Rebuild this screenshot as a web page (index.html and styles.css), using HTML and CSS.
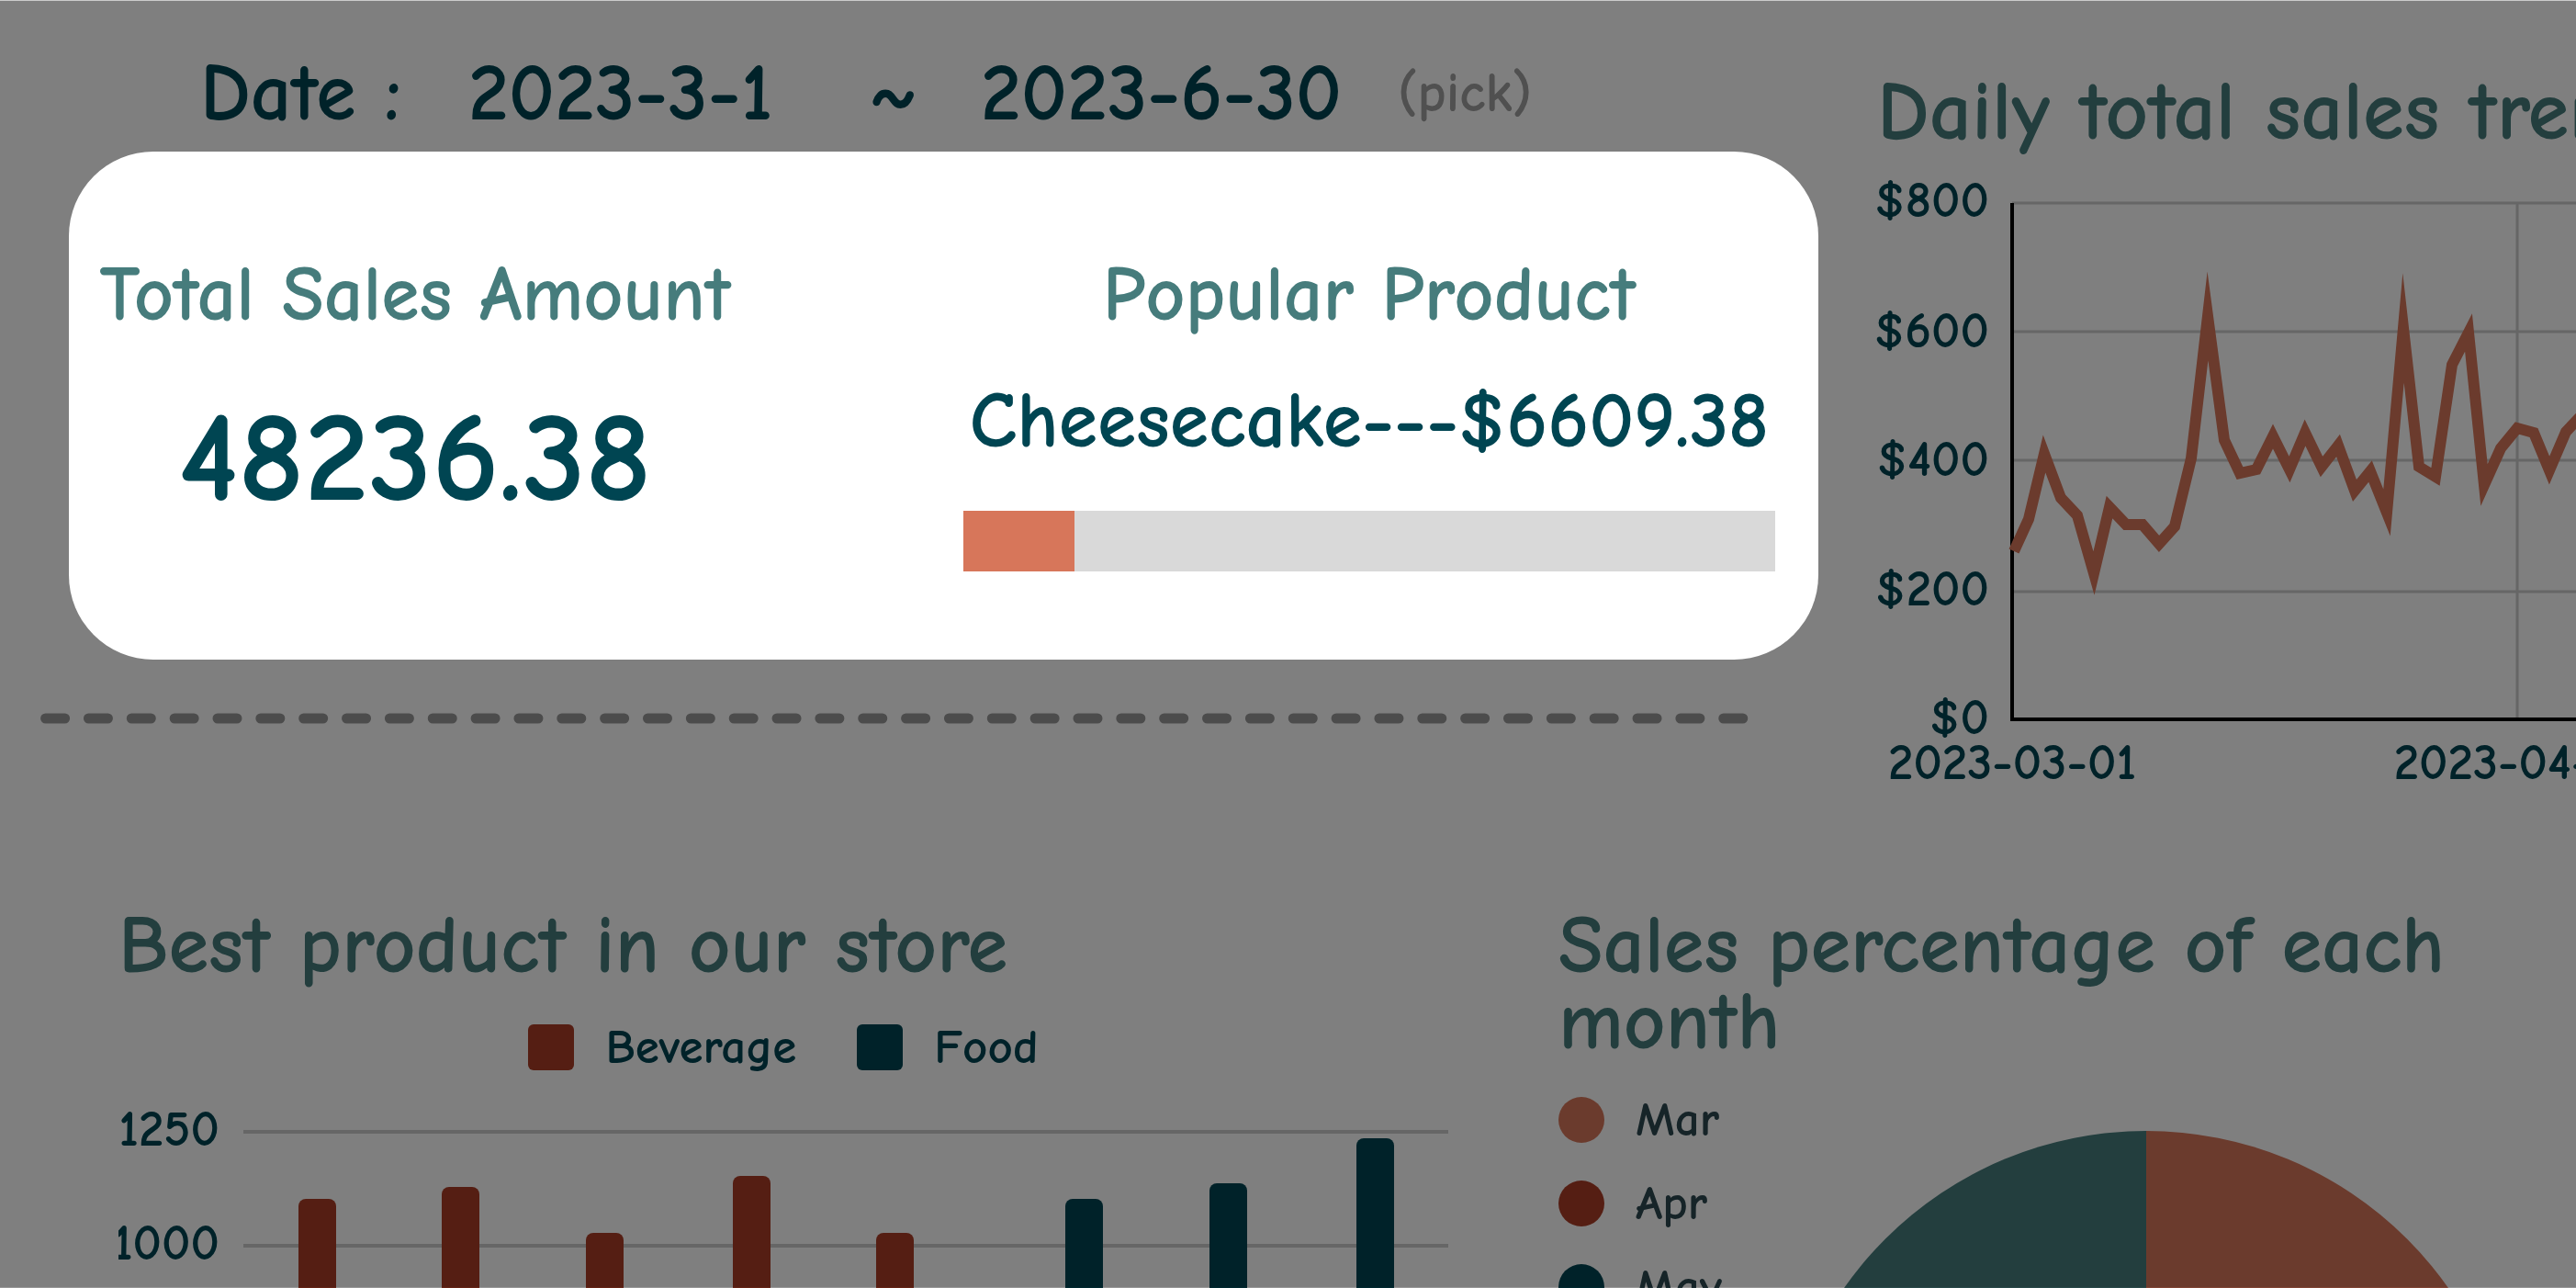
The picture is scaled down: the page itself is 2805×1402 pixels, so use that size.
FILE: index.html
```html
<!DOCTYPE html>
<html lang="en">
<head>
<meta charset="utf-8">
<title>Sales dashboard</title>
<link rel="stylesheet" href="styles.css">
</head>
<body>
<main class="page">
  <section class="summary">
    <div class="overview">
      <div class="dates">
        <span class="dates-label">Date :</span>
        <time class="dates-from">2023-3-1</time>
        <span class="dates-sep">~</span>
        <time class="dates-to">2023-6-30</time>
        <button class="pick" type="button">(pick)</button>
      </div>
      <div class="card">
        <div class="stat">
          <h2 class="card-title">Total Sales Amount</h2>
          <p class="total">48236.38</p>
        </div>
        <div class="stat">
          <h2 class="card-title">Popular Product</h2>
          <p class="product">Cheesecake---$6609.38</p>
          <div class="bar"><div class="bar-fill" style="width:13.7%"></div></div>
        </div>
      </div>
      <svg class="divider" viewBox="0 0 1860 12" aria-hidden="true">
        <line x1="6" y1="6" x2="1856" y2="6" stroke="#999" stroke-width="11" stroke-linecap="round" stroke-dasharray="21 25.85"/>
      </svg>
    </div>
    <div class="trend">
      <h2 class="title title-line">Daily total sales trend</h2>
      <svg class="trend-chart" viewBox="0 0 761 690" role="img" aria-label="Daily total sales trend">
        <g stroke="#ccc" stroke-width="3">
          <path d="M147 41H761M147 181H761M147 321H761M147 464H761M697 41V603"/>
        </g>
        <path d="M147 41V603H761" fill="none" stroke="#000" stroke-width="4"/>
        <polyline fill="none" stroke="#d7765a" stroke-width="12" stroke-miterlimit="30" points="149,420 165,385 182,314 200,362 218,381 236,444 253,372 271,391 289,391 307,412 324,393 342,319 360,164 378,299 395,335 413,331 431,295 449,331 466,291 484,328 502,305 520,354 537,333 555,378 573,177 590,328 608,339 626,217 644,182 661,348 679,308 697,286 715,291 732,332 750,290 768,271"/>
        <g class="tick" text-anchor="end">
          <text x="122" y="56">$800</text>
          <text x="122" y="198">$600</text>
          <text x="122" y="338">$400</text>
          <text x="122" y="479">$200</text>
          <text x="122" y="619">$0</text>
        </g>
        <g class="tick" text-anchor="middle">
          <text x="147" y="668">2023-03-01</text>
          <text x="697" y="668">2023-04-01</text>
        </g>
      </svg>
    </div>
  </section>

  <section class="details">
    <div class="best">
      <h2 class="title">Best product in our store</h2>
      <ul class="legend-row">
        <li class="key"><span class="swatch beverage"></span>Beverage</li>
        <li class="key"><span class="swatch food"></span>Food</li>
      </ul>
      <svg class="best-chart" viewBox="0 0 1448 460" role="img" aria-label="Best products">
        <path d="M136 42H1448M136 166H1448" stroke="#ccc" stroke-width="4"/>
        <g fill="#aa3c26">
          <rect x="196" y="115" width="41" height="400" rx="8"/>
          <rect x="352" y="102" width="41" height="400" rx="8"/>
          <rect x="509" y="152" width="41" height="400" rx="8"/>
          <rect x="669" y="90" width="41" height="400" rx="8"/>
          <rect x="825" y="152" width="41" height="400" rx="8"/>
        </g>
        <g fill="#004552">
          <rect x="1031" y="115" width="41" height="400" rx="8"/>
          <rect x="1188" y="98" width="41" height="400" rx="8"/>
          <rect x="1348" y="49" width="41" height="400" rx="8"/>
        </g>
        <g class="tick" text-anchor="end">
          <text x="110" y="57">1250</text>
          <text x="110" y="181">1000</text>
        </g>
      </svg>
    </div>
    <div class="months">
      <h2 class="title">Sales percentage of each month</h2>
      <div class="months-body">
        <ul class="legend-col">
          <li class="key"><span class="dot mar"></span>Mar</li>
          <li class="key"><span class="dot apr"></span>Apr</li>
          <li class="key"><span class="dot may"></span>May</li>
        </ul>
        <svg class="pie" viewBox="0 0 804 804" role="img" aria-label="Sales by month">
          <path d="M402 402V0A402 402 0 0 1 402 804Z" fill="#d7765a"/>
          <path d="M402 402V0A402 402 0 0 0 402 804Z" fill="#467c7c"/>
        </svg>
      </div>
    </div>
  </section>
</main>
<div class="overlay"></div>
</body>
</html>
```
FILE: styles.css
```css
* { box-sizing: border-box; margin: 0; padding: 0; }

body {
  height: 100vh;
  overflow: hidden;
  background: #fff;
  color: #004552;
  font-family: "Comic Sans MS", "Comic Neue", "Open Sans", sans-serif;
  font-weight: 700;
}

ul { list-style: none; }

.overlay {
  position: fixed;
  inset: 0;
  z-index: 1;
  background: rgba(0, 0, 0, 0.5);
  background-clip: padding-box;
  border-top: 1px solid rgba(0, 0, 0, 0.2);
  border-bottom: 1px solid rgba(0, 0, 0, 0.4);
}

.summary {
  display: grid;
  grid-template-columns: minmax(0, 1980fr) minmax(0, 761fr);
  column-gap: 64px;
}

.dates {
  display: flex;
  align-items: center;
  padding: 52px 0 13px 218px;
  font-size: 88px;
  line-height: 100px;
  white-space: nowrap;
}
.dates-label { width: 292px; }
.dates-from { width: 436px; }
.dates-sep { width: 122px; }
.dates-to { width: 454px; }
.pick {
  border: 0;
  background: none;
  color: #a0a0a0;
  font: inherit;
  font-size: 60px;
}

.card {
  position: relative;
  z-index: 2;
  display: grid;
  grid-template-columns: minmax(0, 694fr) minmax(0, 884fr);
  column-gap: 250px;
  margin-left: 75px;
  padding: 106px 47px 96px 30px;
  border-radius: 92px;
  background: #fff;
  text-align: center;
  white-space: nowrap;
}
.card-title {
  color: #467c7c;
  font-size: 84px;
  font-weight: 700;
  line-height: 100px;
}
.total {
  margin-top: 58px;
  font-size: 140px;
  line-height: 140px;
}
.product {
  margin-top: 38px;
  font-size: 86px;
  line-height: 100px;
}
.bar {
  height: 66px;
  margin-top: 47px;
  background: #d9d9d9;
}
.bar-fill { height: 100%; background: #d7765a; }

.divider {
  display: block;
  width: 94%;
  margin: 58px 0 0 43px;
}

.title {
  color: #467c7c;
  font-size: 89px;
  font-weight: 700;
  line-height: 83px;
}
.title-line {
  overflow: hidden;
  font-size: 91px;
  line-height: 100px;
  white-space: nowrap;
}

.trend { padding-top: 72px; }
.trend-chart {
  display: block;
  width: 100%;
  margin-top: 8px;
  overflow: visible;
}

.tick { fill: #004552; font-size: 55px; }

.details {
  display: grid;
  grid-template-columns: minmax(0, 1448fr) minmax(0, 1108fr);
  column-gap: 120px;
  margin-top: 118px;
  padding-left: 129px;
}

.legend-row {
  display: flex;
  justify-content: center;
  gap: 66px;
  margin-top: 44px;
}
.key {
  display: flex;
  align-items: center;
  gap: 34px;
  font-size: 53px;
  line-height: 50px;
}
.swatch, .dot {
  flex: none;
  width: 50px;
  height: 50px;
  border-radius: 6px;
}
.dot { border-radius: 50%; }
.beverage, .apr { background: #aa3c26; }
.food, .may { background: #004552; }
.mar { background: #d7765a; }

.best-chart { display: block; width: 100%; margin-top: 25px; }

.months-body {
  display: flex;
  align-items: flex-start;
  gap: 38px;
  margin-top: 40px;
}
.legend-col {
  display: flex;
  flex-direction: column;
  gap: 41px;
  width: 200px;
  color: #2c4850;
}
.pie { flex: 0 0 804px; margin-top: 37px; }
```
